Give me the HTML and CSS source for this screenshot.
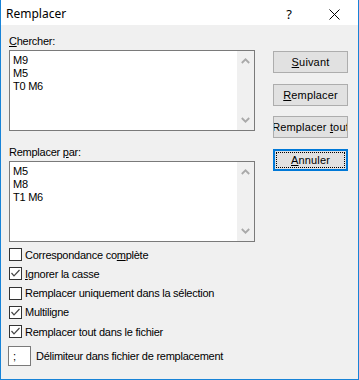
FILE: index.html
```html
<!DOCTYPE html>
<html lang="fr">
<head>
<meta charset="utf-8">
<title>Remplacer</title>
<link rel="stylesheet" href="styles.css">
</head>
<body>
<div class="win">
  <div class="titlebar">
    <span class="title">Remplacer</span>
    <span class="help">?</span>
    <span class="close"><svg width="11" height="11" viewBox="0 0 11 11"><path d="M0.5 0.5 L10.5 10.5 M10.5 0.5 L0.5 10.5" stroke="#000" stroke-width="1" fill="none"/></svg></span>
  </div>
  <div class="content">
    <div class="main">
      <div class="lbl"><u>C</u>hercher:</div>
      <div class="ta">
        <div class="ta-text">M9<br>M5<br>T0 M6</div>
        <div class="sb">
          <span class="arr"><svg width="9" height="6" viewBox="0 0 9 6"><polyline points="0.8,5 4.5,1.3 8.2,5" stroke="#a9a9a9" stroke-width="1.8" fill="none"/></svg></span>
          <span class="arr"><svg width="9" height="6" viewBox="0 0 9 6"><polyline points="0.8,1 4.5,4.7 8.2,1" stroke="#a9a9a9" stroke-width="1.8" fill="none"/></svg></span>
        </div>
      </div>
      <div class="lbl lbl2">Remplacer <u>p</u>ar:</div>
      <div class="ta">
        <div class="ta-text">M5<br>M8<br>T1 M6</div>
        <div class="sb">
          <span class="arr"><svg width="9" height="6" viewBox="0 0 9 6"><polyline points="0.8,5 4.5,1.3 8.2,5" stroke="#a9a9a9" stroke-width="1.8" fill="none"/></svg></span>
          <span class="arr"><svg width="9" height="6" viewBox="0 0 9 6"><polyline points="0.8,1 4.5,4.7 8.2,1" stroke="#a9a9a9" stroke-width="1.8" fill="none"/></svg></span>
        </div>
      </div>
      <div class="checks">
        <div class="row"><span class="cb"></span><span>Correspondance co<u>m</u>plète</span></div>
        <div class="row"><span class="cb"><svg width="11" height="11" viewBox="0 0 11 11"><polyline points="1.5,5 4,7.8 9.5,2" stroke="#444" stroke-width="1.2" fill="none"/></svg></span><span><u>I</u>gnorer la casse</span></div>
        <div class="row"><span class="cb"></span><span>Remplacer uniquement dans la sélection</span></div>
        <div class="row"><span class="cb"><svg width="11" height="11" viewBox="0 0 11 11"><polyline points="1.5,5 4,7.8 9.5,2" stroke="#444" stroke-width="1.2" fill="none"/></svg></span><span>Multiligne</span></div>
        <div class="row"><span class="cb"><svg width="11" height="11" viewBox="0 0 11 11"><polyline points="1.5,5 4,7.8 9.5,2" stroke="#444" stroke-width="1.2" fill="none"/></svg></span><span>Remplacer tout dans le fichier</span></div>
      </div>
      <div class="delim">
        <span class="delim-box">;</span>
        <span>Délimiteur dans fichier de remplacement</span>
      </div>
    </div>
    <div class="side">
      <div class="btn"><span><u>S</u>uivant</span></div>
      <div class="btn"><span><u>R</u>emplacer</span></div>
      <div class="btn"><span>Remplacer <u>t</u>out</span></div>
      <div class="btn btn-default"><span class="focus"><u>A</u>nnuler</span></div>
    </div>
  </div>
</div>
</body>
</html>
```
FILE: styles.css
```css
html, body {
  margin: 0;
  padding: 0;
}
body {
  width: 359px;
  height: 380px;
  overflow: hidden;
  font-family: "Liberation Sans", Arial, sans-serif;
  font-size: 11px;
  color: #000;
  background: #f0f0f0;
}
u { text-decoration: underline; text-underline-offset: 1px; }
.win {
  box-sizing: border-box;
  width: 359px;
  height: 380px;
  border: 1px solid #1883d7;
  border-top: none;
  background: #f0f0f0;
  display: flex;
  flex-direction: column;
}
.titlebar {
  height: 25px;
  background: #fff;
  display: flex;
  align-items: center;
  font-family: "Noto Sans", "Open Sans", sans-serif;
  font-size: 12px;
}
.title {
  margin-left: 5px;
  margin-top: 2px;
  flex: 1;
}
.help {
  font-size: 13px;
  margin-right: 37px;
  margin-top: 2px;
}
.close {
  display: flex;
  margin-right: 18px;
  margin-top: 3px;
}
.content {
  flex: 1;
  display: grid;
  grid-template-columns: 246px 75px;
  column-gap: 18px;
  padding: 10px 0 0 8px;
  align-items: start;
}
.main {
  display: flex;
  flex-direction: column;
  letter-spacing: -0.25px;
}
.lbl {
  line-height: 13px;
  height: 13px;
  margin-bottom: 2px;
}
.lbl2 {
  margin-top: 15px;
}
.ta {
  box-sizing: border-box;
  height: 81px;
  border: 1px solid #7a7a7a;
  background: #fff;
  display: flex;
}
.ta-text {
  flex: 1;
  padding: 3px 0 0 3px;
  line-height: 13px;
}
.sb {
  width: 17px;
  background: #f0f0f0;
  display: flex;
  flex-direction: column;
  justify-content: space-between;
}
.arr {
  height: 20px;
  display: flex;
  align-items: center;
  justify-content: center;
}
.checks {
  margin-top: 3px;
  display: flex;
  flex-direction: column;
}
.row {
  height: 19.25px;
  display: flex;
  align-items: center;
  gap: 3px;
}
.cb {
  box-sizing: border-box;
  width: 13px;
  height: 13px;
  border: 1px solid #333;
  background: #fff;
  display: flex;
  align-items: center;
  justify-content: center;
}
.delim {
  margin-top: 5px;
  margin-left: -1px;
  display: flex;
  align-items: center;
  gap: 5px;
}
.delim-box {
  box-sizing: border-box;
  width: 23px;
  height: 20px;
  border: 1px solid #7a7a7a;
  background: #fff;
  padding: 3px 0 0 4px;
  line-height: 13px;
}
.side {
  display: flex;
  flex-direction: column;
  gap: 10.6px;
  padding-top: 16px;
}
.btn {
  box-sizing: border-box;
  height: 22px;
  border: 1px solid #adadad;
  background: #e1e1e1;
  display: flex;
  align-items: center;
  justify-content: center;
  white-space: nowrap;
  overflow: hidden;
  letter-spacing: 0.15px;
}
.btn-default {
  border: 2px solid #0078d7;
  padding: 1px;
  align-items: stretch;
}
.focus {
  flex: 1;
  display: flex;
  align-items: center;
  justify-content: center;
  outline: 1px dotted #000;
  outline-offset: -1px;
}
```
